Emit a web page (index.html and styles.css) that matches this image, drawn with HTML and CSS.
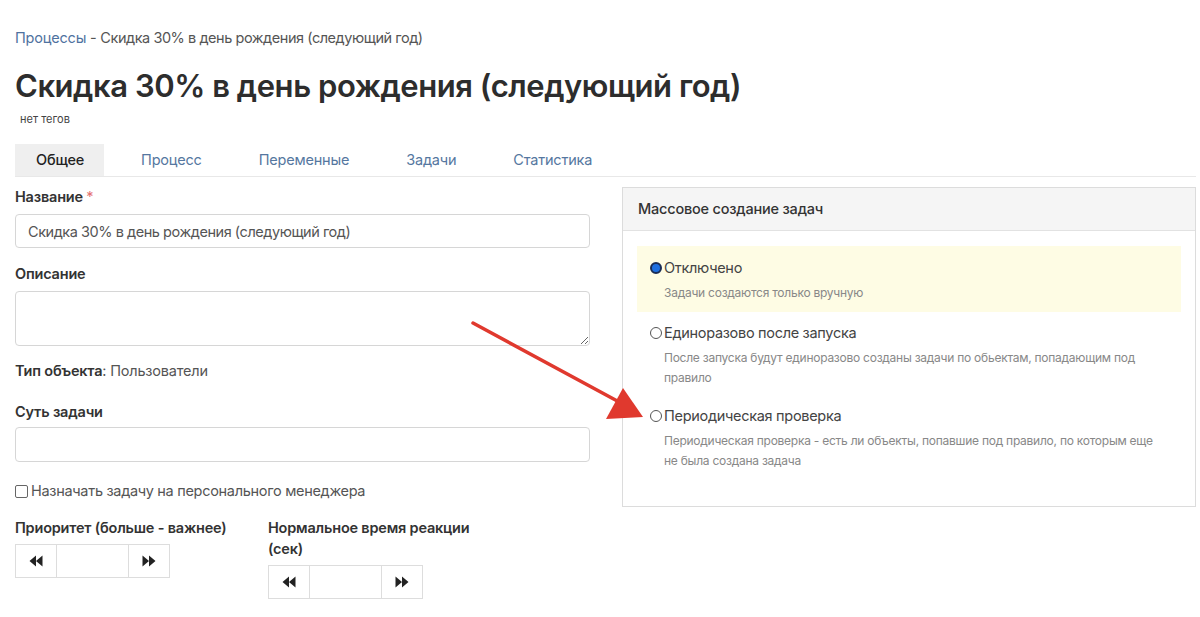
FILE: index.html
```html
<!DOCTYPE html>
<html lang="ru">
<head>
<meta charset="utf-8">
<title>Скидка 30% в день рождения (следующий год)</title>
<link rel="stylesheet" href="styles.css">
</head>
<body>
<div class="page">
  <div class="breadcrumb"><a class="crumb-link" href="#">Процессы</a><span class="crumb-sep"> - </span><span class="crumb-current">Скидка 30% в день рождения (следующий год)</span></div>
  <h1 class="title">Скидка 30% в день рождения (следующий год)</h1>
  <div class="tags">нет тегов</div>
  <nav class="tabs">
    <a class="tab active" href="#">Общее</a>
    <a class="tab" href="#">Процесс</a>
    <a class="tab" href="#">Переменные</a>
    <a class="tab" href="#">Задачи</a>
    <a class="tab" href="#">Статистика</a>
  </nav>
  <div class="columns">
    <div class="col-left">
      <div class="field">
        <label class="label">Название <span class="req">*</span></label>
        <input class="input" type="text" value="Скидка 30% в день рождения (следующий год)">
      </div>
      <div class="field">
        <label class="label">Описание</label>
        <textarea class="textarea"></textarea>
      </div>
      <div class="object-type"><b>Тип объекта</b>: Пользователи</div>
      <div class="field">
        <label class="label short">Суть задачи</label>
        <input class="input tall" type="text">
      </div>
      <label class="check"><span class="checkbox"></span>Назначать задачу на персонального менеджера</label>
      <div class="spin-row">
        <div class="spin-field">
          <div class="label">Приоритет (больше - важнее)</div>
          <div class="spinner">
            <span class="spin-btn"><svg width="14" height="14" viewBox="0 0 14 14"><path d="M7 1.5 L0.5 7 L7 12.5 Z M13.5 1.5 L7 7 L13.5 12.5 Z" fill="#222"/></svg></span>
            <span class="spin-input"></span>
            <span class="spin-btn"><svg width="14" height="14" viewBox="0 0 14 14"><path d="M0.5 1.5 L7 7 L0.5 12.5 Z M7 1.5 L13.5 7 L7 12.5 Z" fill="#222"/></svg></span>
          </div>
        </div>
        <div class="spin-field">
          <div class="label narrow">Нормальное время реакции (сек)</div>
          <div class="spinner">
            <span class="spin-btn"><svg width="14" height="14" viewBox="0 0 14 14"><path d="M7 1.5 L0.5 7 L7 12.5 Z M13.5 1.5 L7 7 L13.5 12.5 Z" fill="#222"/></svg></span>
            <span class="spin-input"></span>
            <span class="spin-btn"><svg width="14" height="14" viewBox="0 0 14 14"><path d="M0.5 1.5 L7 7 L0.5 12.5 Z M7 1.5 L13.5 7 L7 12.5 Z" fill="#222"/></svg></span>
          </div>
        </div>
      </div>
    </div>
    <div class="col-right">
      <div class="panel">
        <div class="panel-head">Массовое создание задач</div>
        <div class="panel-body">
          <div class="option selected">
            <div class="opt-title"><span class="radio checked"></span>Отключено</div>
            <div class="opt-desc">Задачи создаются только вручную</div>
          </div>
          <div class="option">
            <div class="opt-title"><span class="radio"></span>Единоразово после запуска</div>
            <div class="opt-desc">После запуска будут единоразово созданы задачи по обьектам, попадающим под правило</div>
          </div>
          <div class="option">
            <div class="opt-title"><span class="radio"></span>Периодическая проверка</div>
            <div class="opt-desc">Периодическая проверка - есть ли объекты, попавшие под правило, по которым еще не была создана задача</div>
          </div>
        </div>
      </div>
    </div>
  </div>
  <svg class="arrow" width="190" height="110" viewBox="0 0 190 110">
    <line x1="2" y1="2" x2="150" y2="82" stroke="#e0392e" stroke-width="3.5" stroke-linecap="round"/>
    <path d="M172 96 L135 98 L152 67 Z" fill="#e0392e"/>
  </svg>
</div>
</body>
</html>
```
FILE: styles.css
```css
* { box-sizing: border-box; }
html, body { margin: 0; padding: 0; background: #fff; }
body {
  font-family: Inter, "Noto Sans", sans-serif;
  color: #333;
  font-size: 15px;
  overflow: hidden;
}
.page {
  position: relative;
  padding: 27px 4px 0 15px;
}
.breadcrumb {
  font-size: 14.5px;
  line-height: 22px;
  color: #555;
  letter-spacing: -0.2px;
}
.crumb-link { color: #4f72a0; text-decoration: none; }
.crumb-sep { color: #555; }
.crumb-current { letter-spacing: -0.45px; }
.title {
  margin: 17px 0 0 0;
  font-size: 31px;
  line-height: 40px;
  font-weight: 600;
  color: #2d2d2d;
  letter-spacing: -0.45px;
}
.tags {
  font-size: 11px;
  color: #444;
  margin: 6px 0 0 5px;
  line-height: 14px;
}
.tabs {
  display: flex;
  margin-top: 18px;
  border-bottom: 1px solid #e8e8e8;
  height: 33px;
}
.tab {
  display: block;
  padding: 0 20px 0 21px;
  margin-right: 16px;
  line-height: 32px;
  font-size: 14.5px;
  color: #5577a0;
  text-decoration: none;
  letter-spacing: -0.2px;
}
.tab.active {
  background: #efefef;
  color: #222;
  font-weight: 500;
}
.columns {
  display: grid;
  grid-template-columns: 575px 574px;
  column-gap: 32px;
  margin-top: 10px;
}
.label {
  display: block;
  font-weight: 600;
  font-size: 14.5px;
  line-height: 20px;
  color: #333;
  letter-spacing: -0.2px;
}
.req { color: #e57373; font-weight: 400; }
.field { margin-bottom: 16px; }
.field .label { margin-bottom: 7px; }
.field .label.short { margin-bottom: 5px; }
.input {
  display: block;
  width: 100%;
  height: 34px;
  border: 1px solid #d6d6d6;
  border-radius: 4px;
  padding: 0 12px;
  font-family: inherit;
  font-size: 14.5px;
  color: #555;
  letter-spacing: -0.45px;
  outline: none;
}
.input.tall { height: 35px; }
.textarea {
  display: block;
  width: 100%;
  height: 55px;
  border: 1px solid #d6d6d6;
  border-radius: 4px;
  font-family: inherit;
  resize: vertical;
  outline: none;
}
.object-type {
  font-size: 14.5px;
  line-height: 20px;
  color: #555;
  margin: -1px 0 21px 0;
  letter-spacing: -0.2px;
}
.object-type b { font-weight: 600; color: #333; }
.check {
  display: flex;
  align-items: center;
  font-size: 14.5px;
  line-height: 20px;
  color: #555;
  letter-spacing: -0.3px;
  margin-top: 19px;
}
.checkbox {
  width: 13px;
  height: 13px;
  border: 1px solid #666;
  border-radius: 2px;
  margin-right: 3px;
  flex: none;
}
.spin-row {
  display: flex;
  margin-top: 16px;
  gap: 98px;
}
.spin-field .label { margin-bottom: 6px; line-height: 21px; }
.label.narrow { width: 220px; margin-bottom: 6px; }
.spinner {
  display: flex;
  height: 34px;
  width: 155px;
  border: 1px solid #ddd;
}
.spin-btn {
  width: 40px;
  display: flex;
  align-items: center;
  justify-content: center;
}
.spin-input {
  flex: 1;
  border-left: 1px solid #ddd;
  border-right: 1px solid #ddd;
}
.spin-field:first-child { width: 155px; white-space: nowrap; }
.panel {
  margin-top: 0;
  border: 1px solid #dcdcdc;
  height: 320px;
}
.panel-head {
  background: #f5f5f5;
  border-bottom: 1px solid #e2e2e2;
  height: 43px;
  line-height: 42px;
  padding: 0 15px;
  font-size: 14.5px;
  color: #333;
  font-weight: 500;
  letter-spacing: -0.2px;
}
.panel-body { padding: 15px 14px; }
.option {
  padding: 10px 16px 8px 13px;
}
.option.selected { background: #fefce4; padding-top: 12px; padding-bottom: 9px; margin-bottom: 1px; }
.opt-title {
  display: flex;
  align-items: center;
  font-size: 14.5px;
  line-height: 20px;
  color: #444;
  letter-spacing: -0.3px;
}
.radio {
  width: 12px;
  height: 12px;
  border: 1px solid #555;
  border-radius: 50%;
  margin-right: 2px;
  flex: none;
}
.radio.checked {
  background: #1f6fe0;
  border: 2px solid #1a2c55;
}
.opt-desc {
  margin-top: 5px;
  padding-left: 14px;
  font-size: 12px;
  line-height: 20px;
  color: #888;
  letter-spacing: -0.25px;
}
.arrow {
  position: absolute;
  left: 471px;
  top: 321px;
}
```
